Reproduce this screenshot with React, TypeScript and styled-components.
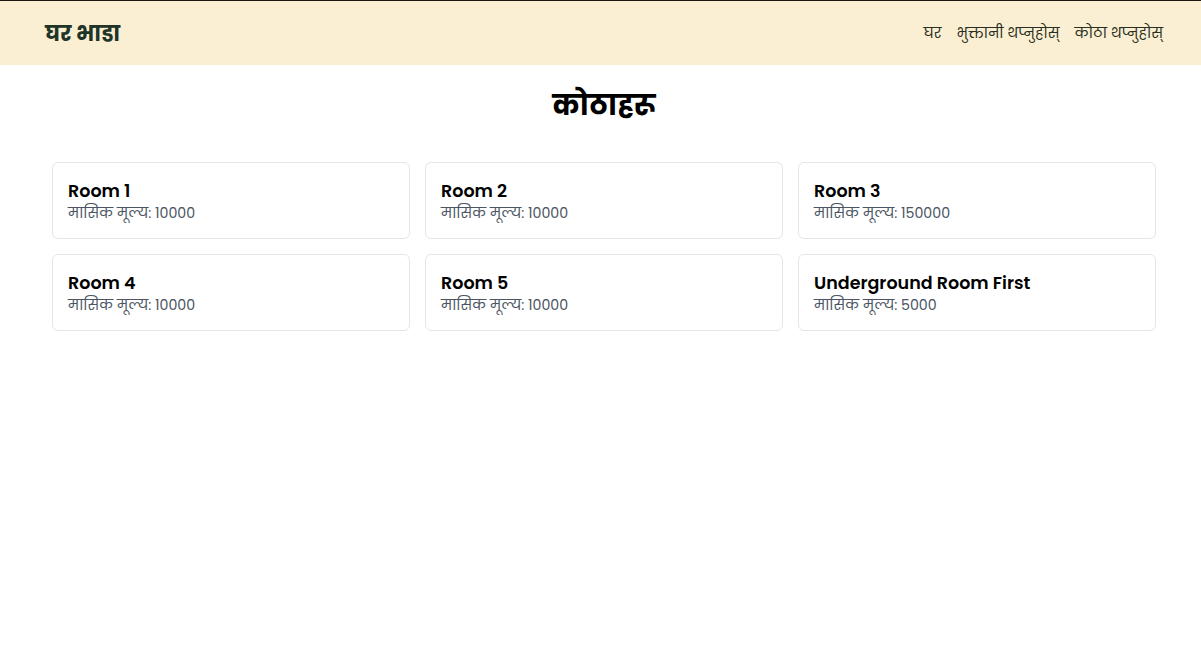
import React from "react";
import styled, { createGlobalStyle } from "styled-components";

const GlobalStyle = createGlobalStyle`
  html, body {
    margin: 0;
    padding: 0;
    background: #ffffff;
  }
  body {
    font-family: "Poppins", "Noto Sans", "Noto Sans Devanagari", Lato, sans-serif;
    color: #111;
  }
  * {
    box-sizing: border-box;
  }
`;

const Header = styled.header`
  height: 65px;
  border-top: 1px solid #1c1410;
  background: #faefd3;
  display: flex;
  align-items: center;
  justify-content: space-between;
  padding: 0 38px 0 45px;
`;

const Brand = styled.div`
  font-size: 21.5px;
  font-weight: 700;
  color: #1f3527;
`;

const Nav = styled.nav`
  display: flex;
  gap: 15px;
`;

const NavLink = styled.a`
  font-size: 14.4px;
  color: #2a2f22;
  text-decoration: none;
  cursor: pointer;
`;

const Main = styled.main`
  padding: 18px 45px 0 52px;
`;

const PageTitle = styled.h1`
  margin: 0 0 35px;
  text-align: center;
  font-size: 28.5px;
  font-weight: 700;
  color: #000;
  line-height: 44px;
`;

const RoomGrid = styled.div`
  display: grid;
  grid-template-columns: repeat(3, 1fr);
  column-gap: 15px;
  row-gap: 15px;
`;

const Card = styled.div`
  height: 77px;
  border: 1px solid #e5e5e5;
  border-radius: 6px;
  padding: 17px 15px 15px;
  display: flex;
  flex-direction: column;
  justify-content: center;
`;

const RoomName = styled.div`
  font-size: 17.5px;
  font-weight: 600;
  color: #000;
  line-height: 22px;
`;

const Price = styled.div`
  font-size: 14.2px;
  color: #4b5563;
  line-height: 22px;
`;

const rooms = [
  { name: "Room 1", price: 10000 },
  { name: "Room 2", price: 10000 },
  { name: "Room 3", price: 150000 },
  { name: "Room 4", price: 10000 },
  { name: "Room 5", price: 10000 },
  { name: "Underground Room First", price: 5000 },
];

export default function App() {
  return (
    <>
      <GlobalStyle />
      <Header>
        <Brand>घर भाडा</Brand>
        <Nav>
          <NavLink>घर</NavLink>
          <NavLink>भुक्तानी थप्नुहोस्</NavLink>
          <NavLink>कोठा थप्नुहोस्</NavLink>
        </Nav>
      </Header>
      <Main>
        <PageTitle>कोठाहरू</PageTitle>
        <RoomGrid>
          {rooms.map((r) => (
            <Card key={r.name}>
              <RoomName>{r.name}</RoomName>
              <Price>मासिक मूल्य: {r.price}</Price>
            </Card>
          ))}
        </RoomGrid>
      </Main>
    </>
  );
}
